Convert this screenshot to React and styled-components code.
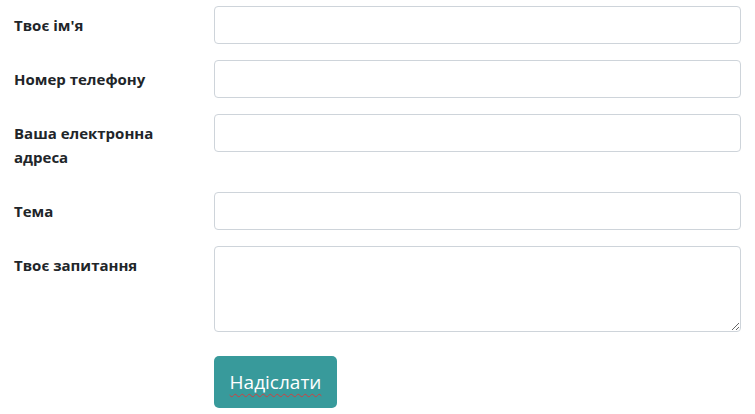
import React from "react";
import styled, { createGlobalStyle } from "styled-components";

const GlobalStyle = createGlobalStyle`
  body {
    margin: 0;
    background: #fff;
    font-family: "Open Sans", "Noto Sans", sans-serif;
    color: #212529;
  }
`;

const Form = styled.form`
  padding: 6px 14px 0 14px;
`;

const Row = styled.div`
  display: grid;
  grid-template-columns: 200px 1fr;
  align-items: start;
  margin-bottom: 16px;
`;

const Label = styled.label`
  padding: 7px 20px 7px 0;
  font-size: 15px;
  font-weight: 700;
  line-height: 24px;
`;

const Input = styled.input`
  box-sizing: border-box;
  width: 100%;
  height: 38px;
  border: 1px solid #ced4da;
  border-radius: 4px;
  background: #fff;
  font: inherit;
`;

const TextArea = styled.textarea`
  box-sizing: border-box;
  width: 100%;
  height: 86px;
  border: 1px solid #ced4da;
  border-radius: 4px;
  background: #fff;
  font: inherit;
  display: block;
`;

const Actions = styled.div`
  display: grid;
  grid-template-columns: 200px 1fr;
  padding-top: 8px;
`;

const SubmitButton = styled.button`
  grid-column: 2;
  justify-self: start;
  width: 123px;
  height: 52px;
  padding: 0;
  border: none;
  border-radius: 5px;
  background: #389a9b;
  color: #fff;
  font-family: "Open Sans", "Noto Sans", sans-serif;
  font-size: 19px;
  cursor: pointer;

  span {
    text-decoration: underline wavy #d04040;
    text-decoration-thickness: 1px;
    text-underline-offset: 4px;
  }
`;

const fields = [
  { label: "Твоє ім'я" },
  { label: "Номер телефону" },
  { label: "Ваша електронна адреса" },
  { label: "Тема" },
];

function App() {
  return (
    <>
      <GlobalStyle />
      <Form onSubmit={(e) => e.preventDefault()}>
        {fields.map((f) => (
          <Row key={f.label}>
            <Label>{f.label}</Label>
            <Input type="text" />
          </Row>
        ))}
        <Row>
          <Label>Твоє запитання</Label>
          <TextArea />
        </Row>
        <Actions>
          <SubmitButton type="submit">
            <span>Надіслати</span>
          </SubmitButton>
        </Actions>
      </Form>
    </>
  );
}

export default App;
